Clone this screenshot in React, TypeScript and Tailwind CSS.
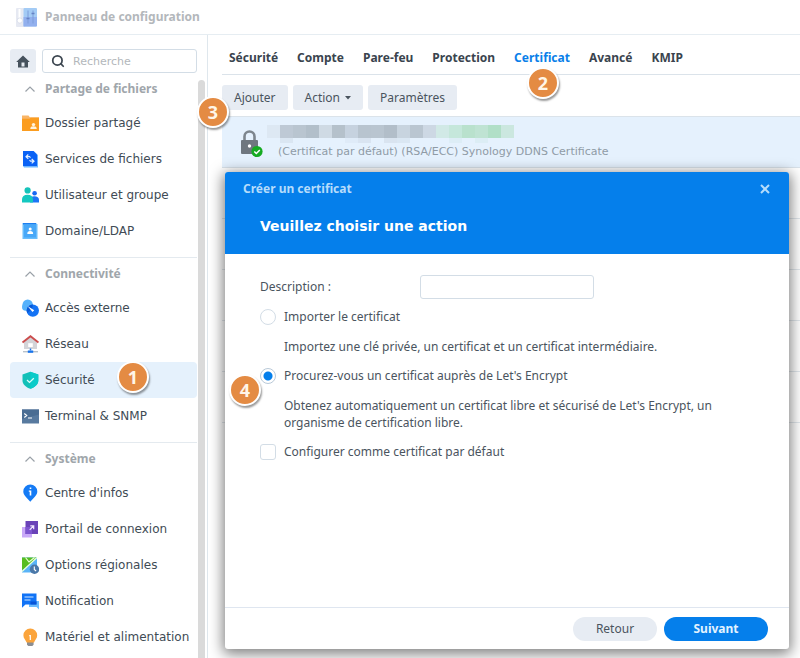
import { ReactNode } from 'react';
import { Search } from 'lucide-react';

type NavItem = { label: string, icon: ReactNode, active?: boolean };
type NavGroup = { title: string, items: NavItem[] };

// Icons of the navigation, all drawn on an 18x18 grid
const Icon = (props: { children: ReactNode }) => (
    <svg viewBox="0 0 18 18" className="size-[18px] shrink-0" aria-hidden="true">{props.children}</svg>
);

const SharedFolderIcon = () => (
    <Icon>
        <path d="M1 1.500h6.500l1.300 1.700H18V7H1z" fill="#f9b566" />
        <path d="M1 4.700h7.500l1-1H18V17H1z" fill="#fb9d20" />
        <circle cx="12.500" cy="10.600" r="1.700" fill="#fff3dc" />
        <path d="M9.300 15c0-2 1-2.700 3.200-2.700s3.200.7 3.200 2.700z" fill="#fff3dc" />
    </Icon>
);

const FileServicesIcon = () => (
    <Icon>
        <path d="M2 1h10.500L17 5v12.500H3L2 16z" fill="#6db6ff" />
        <path d="M2 1h10.500L16 4.500v11.500H2z" fill="#0a62f5" />
        <path d="M7.300 4.500 5 6.700l2.300 2.200M5.200 6.700h3.300l1 1" fill="none" stroke="#e4f1ff" strokeWidth="1.200" />
        <path d="m10.700 9 2.300 2.200-2.300 2.200M12.800 11.200H9.500l-1-1" fill="none" stroke="#e4f1ff" strokeWidth="1.200" />
    </Icon>
);

const UsersIcon = () => (
    <Icon>
        <circle cx="13.600" cy="7.200" r="2.300" fill="#1769f2" />
        <path d="M9 16.500v-2.700c0-2.300 1.700-3.500 4.300-3.500 2.900 0 4.700 1.300 4.700 3.700v2.500z" fill="#1c76f5" />
        <circle cx="6.600" cy="4.400" r="3.100" fill="#15c3ba" />
        <path d="M1 16.500v-3C1 10.400 3 8.700 6.500 8.700s5.500 1.700 5.500 4.800v3z" fill="#14c8c0" />
    </Icon>
);

const DomainIcon = () => (
    <Icon>
        <path d="M1.500 1H15l1.500 1.500V17h-15z" fill="#69bdfc" />
        <path d="M2 1h13v1.500H2z" fill="#1e7ff0" />
        <path d="M3 2.500h12v13H3z" fill="#48a8f8" />
        <circle cx="9.200" cy="7" r="1.500" fill="#fff" />
        <path d="M6.300 12c0-2.300.8-3 2.900-3s2.900.7 2.900 3z" fill="#fff" />
    </Icon>
);

const ExternalAccessIcon = () => (
    <Icon>
        <circle cx="6.700" cy="5.700" r="5.200" fill="#55b1fb" />
        <circle cx="4.800" cy="8" r="3.800" fill="#55b1fb" />
        <circle cx="11.800" cy="11.600" r="6.200" fill="#1473f4" />
        <path d="M5.600 11.600a6.200 6.200 0 0 1 6.200-6.200c0 3-1.500 6.200-5.600 8.500a6 6 0 0 1-.6-2.300z" fill="#0759d8" />
        <path d="m6.500 7 6.700 4.300-1.700 1.700z" fill="#fff" />
    </Icon>
);

const NetworkIcon = () => (
    <Icon>
        <path d="M3 6.500 9.500 1 16 6.500V14H3z" fill="#d3d4d8" />
        <path d="M1.500 7.500 9.500 1.200 17.500 7.500" fill="none" stroke="#cb4d4d" strokeWidth="1.900" />
        <path d="M7.200 8.200h4.600V12H7.200z" fill="#fff" />
        <path d="M2 16.700h15" stroke="#b9c2cb" strokeWidth="1.400" />
        <path d="M9.500 13.500v2" stroke="#1674ed" strokeWidth="1.500" />
        <path d="M6.800 15.500h5.400v2.300H6.800z" fill="#1674ed" />
    </Icon>
);

const SecurityIcon = () => (
    <Icon>
        <path d="M9.300.8 17.300 3.500v6c0 4-3.500 6.800-8 8.300C5 16.300 1.500 13.500 1.500 9.500v-6z" fill="#12c0b8" />
        <path d="M9.300.8 17.300 3.500v6c0 4-3.500 6.800-8 8.300z" fill="#0bcbc9" />
        <path d="m6 9 2.500 2.400 4.300-4.200" fill="none" stroke="#d9fffb" strokeWidth="1.300" />
    </Icon>
);

const TerminalIcon = () => (
    <Icon>
        <path d="M1 2.500h17v14H1z" fill="#587a9f" />
        <path d="M1 2.500h17v5L1 12z" fill="#4a6d93" />
        <path d="m3.300 6.500 2.400 2-2.400 2M7 11h4" fill="none" stroke="#fff" strokeWidth="1.200" />
    </Icon>
);

const InfoIcon = () => (
    <Icon>
        <path d="M9.300.5a7 7 0 0 1 7 7c0 4-4.200 6.500-7 10.300C6.500 14 2.300 11.500 2.300 7.500a7 7 0 0 1 7-7z" fill="#157bf5" />
        <path d="M8.700 3.500h1.600v1.600H8.700zM7.800 6.500h2.500v5H8.700V7.700h-.9z" fill="#fff" />
    </Icon>
);

const PortalIcon = () => (
    <Icon>
        <path d="M1 7h10v10.500H1z" fill="#c9a9f8" />
        <path d="M4.500 1H17v13H4.500z" fill="#6a43b8" />
        <path d="M4.500 7H11v7H4.500z" fill="#7d55cf" />
        <path d="m8.700 9.800 3.800-3.800M9.300 5.800h3.400v3.400" fill="none" stroke="#f0e6ff" strokeWidth="1.200" />
    </Icon>
);

const RegionIcon = () => (
    <Icon>
        <path d="M1 1.500h15v15H1z" fill="#5ab4f8" />
        <path d="M1 1.500h15L3.500 12.500 1 14z" fill="#57bd21" />
        <path d="M4.500 1.500 8 6l5.500-4.500M16 1.500l-15 14" fill="none" stroke="#eaffd9" strokeWidth="1.200" />
        <circle cx="13.500" cy="13.300" r="4.700" fill="#4b78a8" />
        <path d="M13.300 10.500v3l1.800 1.500" fill="none" stroke="#fff" strokeWidth="1.100" />
    </Icon>
);

const NotificationIcon = () => (
    <Icon>
        <path d="M8 9h10v8.500L15.500 15H8z" fill="#6cbcff" />
        <path d="M1 1.500h14.500v11H4.500L1 15.800z" fill="#1173f6" />
        <path d="M9.500 9.500h6v3h-6z" fill="#0754d8" />
        <path d="M3.500 5h9M3.500 8h6" stroke="#cfe8ff" strokeWidth="1.200" />
    </Icon>
);

const PowerIcon = () => (
    <Icon>
        <path d="M6 13.500h6.600v3.200l-1.300 1.200h-4L6 16.700z" fill="#8b8e93" />
        <path d="M9.300.5a6.800 6.800 0 0 1 6.900 6.800c0 3.200-2.200 4.700-3.200 7.200H5.600c-1-2.500-3.200-4-3.200-7.200A6.800 6.800 0 0 1 9.300.5z" fill="#fba43b" />
        <path d="M8.200 7h1.700v5H8.700V8.200h-.5z" fill="#fff" />
    </Icon>
);

const groups: NavGroup[] = [
    {
        title: 'Partage de fichiers',
        items: [
            { label: 'Dossier partagé', icon: <SharedFolderIcon /> },
            { label: 'Services de fichiers', icon: <FileServicesIcon /> },
            { label: 'Utilisateur et groupe', icon: <UsersIcon /> },
            { label: 'Domaine/LDAP', icon: <DomainIcon /> },
        ],
    },
    {
        title: 'Connectivité',
        items: [
            { label: 'Accès externe', icon: <ExternalAccessIcon /> },
            { label: 'Réseau', icon: <NetworkIcon /> },
            { label: 'Sécurité', icon: <SecurityIcon />, active: true },
            { label: 'Terminal & SNMP', icon: <TerminalIcon /> },
        ],
    },
    {
        title: 'Système',
        items: [
            { label: "Centre d'infos", icon: <InfoIcon /> },
            { label: 'Portail de connexion', icon: <PortalIcon /> },
            { label: 'Options régionales', icon: <RegionIcon /> },
            { label: 'Notification', icon: <NotificationIcon /> },
            { label: 'Matériel et alimentation', icon: <PowerIcon /> },
        ],
    },
];

const tabs = ['Sécurité', 'Compte', 'Pare-feu', 'Protection', 'Certificat', 'Avancé', 'KMIP'];

// Masked domain name: one colour per block
const maskTop = [
    'bg-[#dde8f3]', 'bg-[#bec9d5]', 'bg-[#b9c5d0]', 'bg-[#b2bfca]', 'bg-[#cfdae4]', 'bg-[#b5c1cb]', 'bg-[#c6d2df]',
    'bg-[#b8c4cf]', 'bg-[#b9c5d0]', 'bg-[#b2bec9]', 'bg-[#c8d4df]', 'bg-[#bac6d1]', 'bg-[#cdd8e4]', 'bg-[#d1e9e6]',
    'bg-[#c5e7db]', 'bg-[#b9e1cd]', 'bg-[#bfe3d3]', 'bg-[#b1dfc7]', 'bg-[#cbe7df]',
];
const maskBottom = [
    '', 'bg-[#dae6f2]', '', '', '', '', 'bg-[#dfebf8]', 'bg-[#d9e4f1]', '', 'bg-[#d9e4f0]', 'bg-[#dae7f3]', '', '', '',
    'bg-[#ddedf6]', '', 'bg-[#dcedf5]', '', '',
];

const Header = () => (
    <header className="flex h-[35px] items-center gap-2 border-b border-[#e6edf2] pl-4">
        <svg viewBox="0 0 21 19" className="h-[19px] w-[21px]" aria-hidden="true">
            <rect x="0" y="0" width="9" height="19" rx="1" fill="#e6e9f2" />
            <path d="M3.500 1v9" stroke="#fff" strokeWidth="2" />
            <circle cx="3.800" cy="12.500" r="2.600" fill="#fff" stroke="#cfd5e4" strokeWidth=".6" />
            <rect x="7.500" y="0" width="13.500" height="18.500" rx="1" fill="#a3cbf5" />
            <path d="M7.500 9H21v8.500a1 1 0 0 1-1 1H7.500z" fill="#92b0ee" />
            <path d="M12 2.500v13M17 2.500v13" stroke="#7c9cda" strokeWidth="1" />
            <path d="M10.500 10.500h3M15.500 5.500h3" stroke="#6583c4" strokeWidth="1.500" />
        </svg>
        <h1 className="font-['Noto_Sans',sans-serif] text-xs font-bold text-[#b3b7bb]">Panneau de configuration</h1>
    </header>
);

const SidebarGroup = (props: { group: NavGroup, last: boolean }) => (
    <section className={props.last ? '' : 'border-b border-[#e4eaef] pb-2'}>
        <h2>
            <button className="flex h-8 w-full items-center gap-[9px] pl-[14px] font-['Noto_Sans',sans-serif] text-xs font-bold text-[#a0a6ab]">
                <svg viewBox="0 0 12 12" className="size-3" aria-hidden="true">
                    <path d="m1.500 8.500 4.500-4.500 4.500 4.500" fill="none" stroke="#9aa1a8" strokeWidth="1.200" />
                </svg>
                {props.group.title}
            </button>
        </h2>
        <ul>
            {props.group.items.map((item) => (
                <li key={item.label}>
                    <a
                        href="#"
                        className={`flex h-9 items-center gap-[6px] rounded pl-[11px] text-xs whitespace-nowrap text-[#414b55] ${item.active ? 'bg-[#e5f1fc]' : ''}`}
                    >
                        {item.icon}
                        {item.label}
                    </a>
                </li>
            ))}
        </ul>
    </section>
);

const Sidebar = () => (
    <aside className="flex w-[208px] shrink-0 border-r border-[#dfe7ed] pt-[14px] pl-[10px]">
        <nav className="w-[187px]">
            <div className="flex h-6 gap-[6px]">
                <button className="flex w-[26px] shrink-0 items-center justify-center rounded-[3px] bg-[#e7ecf3]" aria-label="Accueil">
                    <svg viewBox="0 0 14 13" className="h-[13px] w-[14px]" aria-hidden="true">
                        <path d="M7 .5 13.800 7H12v5.500H2V7H.2z" fill="#46525d" />
                        <path d="M5.500 7.500h3v4h-3z" fill="#e7ecf3" />
                    </svg>
                </button>
                <div className="flex min-w-0 grow items-center gap-2 rounded-[3px] border border-[#d3dde6] pl-2">
                    <Search className="size-[14px] shrink-0 text-[#3c4650]" strokeWidth={3} />
                    <input type="search" aria-label="Recherche" placeholder="Recherche" className="h-5 w-full min-w-0 bg-transparent text-[11px] outline-none placeholder:text-[#b3b7bb]" />
                </div>
            </div>
            {groups.map((group, i) => (
                <SidebarGroup key={group.title} group={group} last={i === groups.length - 1} />
            ))}
        </nav>
        <div className="mt-[31px] ml-px w-[7px] rounded-t bg-[#dadada]" />
    </aside>
);

const ToolButton = (props: { children: ReactNode }) => (
    <button className="flex h-[25px] items-center gap-[5px] rounded-[3px] bg-[#e7ecf3] px-3 text-[#4a545e]">{props.children}</button>
);

const CertificateRow = () => (
    <div className="flex h-[51px] items-center border-b border-[#d9e2ea] bg-[#e5f1fd] pt-[2px] pl-[18px]">
        <svg viewBox="0 0 24 30" className="h-[30px] w-6 shrink-0" aria-hidden="true">
            <path d="M4.500 13V8.500a5 5 0 0 1 10 0V13" fill="none" stroke="#7d858d" strokeWidth="2.600" />
            <rect x="1" y="12" width="17" height="14" rx="1" fill="#6f777f" />
            <circle cx="9.500" cy="18" r="1.700" fill="#fff" />
            <circle cx="17" cy="23.500" r="5.600" fill="#16ab22" />
            <path d="m14.300 23.500 2 2 3.500-3.600" fill="none" stroke="#fff" strokeWidth="1.500" />
        </svg>
        <div className="ml-[3px]">
            <div className="flex h-[13px]">
                {maskTop.map((color, i) => <span key={i} className={`w-[13px] ${color}`} />)}
            </div>
            <div className="flex h-[5px]">
                {maskBottom.map((color, i) => <span key={i} className={`w-[13px] ${color}`} />)}
            </div>
            <p className="pl-[11px] text-[11px] leading-[18px] text-[#8f9ba6]">
                (Certificat par défaut) (RSA/ECC) Synology DDNS Certificate
            </p>
        </div>
    </div>
);

const Content = () => (
    <main className="min-w-0 grow pl-[14px] text-xs">
        <nav className="flex h-10 items-center gap-[19px] border-b border-[#dbe3ea] pt-[6px] pl-[7px] font-['Noto_Sans',sans-serif] font-bold text-[#3a444e]">
            {tabs.map((tab) => (
                <a key={tab} href="#" className={tab === 'Certificat' ? 'text-[#0a7fe9]' : ''}>{tab}</a>
            ))}
        </nav>
        <div className="flex gap-[5px] border-b border-[#dbe3ea] pt-[10px] pb-[6px] font-['Noto_Sans',sans-serif]">
            <ToolButton>Ajouter</ToolButton>
            <ToolButton>
                Action
                <svg viewBox="0 0 6 4" className="h-1 w-[6px]" aria-hidden="true"><path d="M0 0h6L3 3.500z" fill="#4a545e" /></svg>
            </ToolButton>
            <ToolButton>Paramètres</ToolButton>
        </div>
        <CertificateRow />
        {[1, 2, 3, 4, 5].map((row) => <div key={row} className="h-[51px] border-b border-[#e1e7ec]" />)}
    </main>
);

const radioClass = "size-4 shrink-0 appearance-none rounded-full border border-[#d3dde6] bg-white checked:border-[#b9c9d8] checked:bg-[radial-gradient(circle,#057feb_4px,#ffffff_5px)]";

const Dialog = () => (
    <div role="dialog" aria-labelledby="dialog-title" className="absolute top-[172px] right-[11px] bottom-[9px] left-[225px] flex flex-col rounded-[3px] bg-white font-['Noto_Sans',sans-serif] text-xs text-[#4a545e] shadow-[0_3px_14px_2px_rgba(0,0,0,0.5)]">
        <div className="h-[82px] rounded-t-[3px] bg-[#057feb] px-[18px] pt-2">
            <div className="flex items-center justify-between">
                <h2 id="dialog-title" className="leading-[18px] font-bold text-[#b5dcfb]">Créer un certificat</h2>
                <button aria-label="Fermer" className="flex size-3 items-center justify-center">
                    <svg viewBox="0 0 10 10" className="size-[10px]" aria-hidden="true">
                        <path d="m1 1 8 8M9 1 1 9" stroke="#b5dcfb" strokeWidth="2" />
                    </svg>
                </button>
            </div>
            <h3 className="mt-[18px] pl-[17px] font-['DejaVu_Sans',sans-serif] text-sm leading-5 font-bold text-white">Veuillez choisir une action</h3>
        </div>
        <form className="grow px-[35px] pt-[21px]">
            <div className="mb-[3px] flex h-6 items-center">
                <label htmlFor="description" className="w-[160px]">Description :</label>
                <input id="description" type="text" className="h-6 w-[174px] rounded-[3px] border border-[#d3dde6] px-2 outline-none" />
            </div>
            <label className="flex h-[30px] items-center gap-2">
                <input type="radio" name="action" className={radioClass} />
                Importer le certificat
            </label>
            <p className="py-[6px] pl-6 leading-[17px]">Importez une clé privée, un certificat et un certificat intermédiaire.</p>
            <label className="flex h-[30px] items-center gap-2">
                <input type="radio" name="action" defaultChecked className={radioClass} />
                Procurez-vous un certificat auprès de Let's Encrypt
            </label>
            <p className="py-[6px] pl-6 leading-[17px]">
                Obtenez automatiquement un certificat libre et sécurisé de Let's Encrypt, un organisme de certification libre.
            </p>
            <label className="flex h-[30px] items-center gap-2">
                <input type="checkbox" className="size-4 shrink-0 appearance-none rounded-[3px] border border-[#d3dde6] bg-white checked:bg-[#057feb]" />
                Configurer comme certificat par défaut
            </label>
        </form>
        <div className="flex h-[42px] items-center justify-end gap-[7px] border-t border-[#dfe6f0] pr-[21px]">
            <button className="h-6 w-[84px] rounded-full bg-[#e7ecf3]">Retour</button>
            <button className="h-6 w-[104px] rounded-full bg-[#057feb] font-bold text-[#e3f3ff]">Suivant</button>
        </div>
    </div>
);

// Numbered step marker lying over the interface
const Step = (props: { value: number, place: string }) => (
    <span className={`absolute flex size-8 items-center justify-center rounded-full border-2 border-white bg-[#e48b43] font-['Open_Sans',sans-serif] text-lg leading-none font-bold text-[#fff6e8] shadow-[1px_2px_2px_rgba(0,0,0,0.4)] ${props.place}`}>
        {props.value}
    </span>
);

const App = () => {
    return (
        <div className="relative flex min-h-screen flex-col bg-white font-['DejaVu_Sans',sans-serif]">
            <Header />
            <div className="flex grow">
                <Sidebar />
                <Content />
            </div>
            <Dialog />
            <Step value={1} place="top-[361px] left-[117px]" />
            <Step value={2} place="top-[67px] left-[527px]" />
            <Step value={3} place="top-[96px] left-[197px]" />
            <Step value={4} place="top-[374px] left-[229px]" />
        </div>
    );
}

export default App;
